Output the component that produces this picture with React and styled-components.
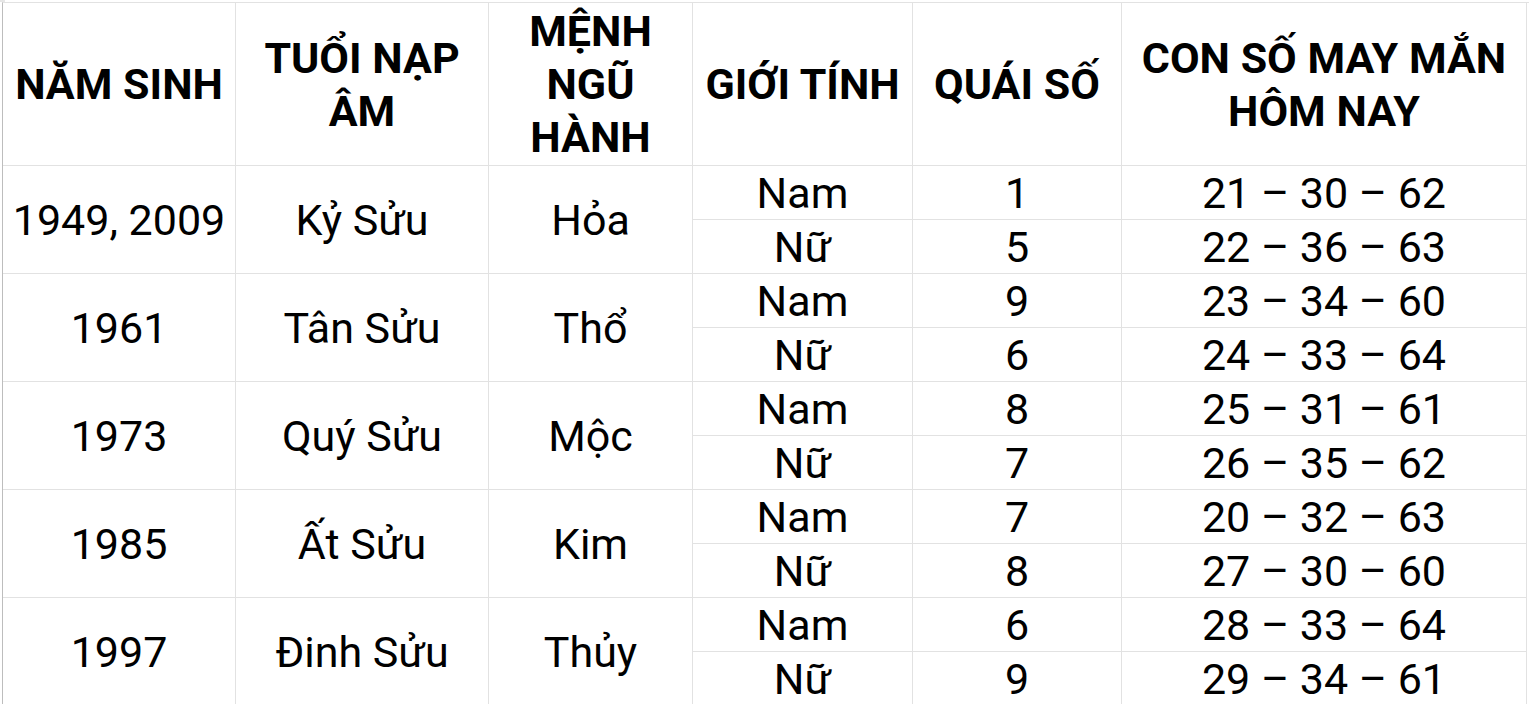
import React from "react";
import styled, { createGlobalStyle } from "styled-components";

const GlobalStyle = createGlobalStyle`
    html, body {
        margin: 0;
        padding: 0;
        background: #ffffff;
    }
    body {
        font-family: Roboto, "Noto Sans", "Liberation Sans", sans-serif;
        color: #000000;
        overflow: hidden;
    }
`;

const Sheet = styled.div`
    padding: 2px 0 0 2px;
    width: 1529px;
    height: 704px;
    box-sizing: border-box;
    position: relative;
    overflow: hidden;
`;

const Corner = styled.div`
    position: absolute;
    top: 0;
    left: 0;
    width: 5px;
    height: 2px;
    background: #e6e6e6;
`;

const Table = styled.div`
    display: grid;
    grid-template-columns: 233px 253px 204px 220px 209px 405px;
    grid-template-rows: 163px repeat(10, 54px);
    border-top: 1px solid #e2e2e2;
    border-left: 1px solid #bdbdbd;
    box-sizing: border-box;
`;

const Cell = styled.div`
    display: flex;
    align-items: center;
    justify-content: center;
    text-align: center;
    box-sizing: border-box;
    padding-top: 1px;
    border-right: 1px solid #e2e2e2;
    border-bottom: 1px solid #e2e2e2;
    font-size: 43px;
    line-height: 53px;
    font-weight: ${(p) => (p.$head ? 700 : 400)};
    grid-row: ${(p) => (p.$span ? `span ${p.$span}` : "auto")};
    white-space: pre-line;
`;

const headers = [
    "NĂM SINH",
    "TUỔI NẠP\nÂM",
    "MỆNH\nNGŨ\nHÀNH",
    "GIỚI TÍNH",
    "QUÁI SỐ",
    "CON SỐ MAY MẮN\nHÔM NAY",
];

const rows = [
    { year: "1949, 2009", tuoi: "Kỷ Sửu", menh: "Hỏa", nam: ["1", "21 – 30 – 62"], nu: ["5", "22 – 36 – 63"] },
    { year: "1961", tuoi: "Tân Sửu", menh: "Thổ", nam: ["9", "23 – 34 – 60"], nu: ["6", "24 – 33 – 64"] },
    { year: "1973", tuoi: "Quý Sửu", menh: "Mộc", nam: ["8", "25 – 31 – 61"], nu: ["7", "26 – 35 – 62"] },
    { year: "1985", tuoi: "Ất Sửu", menh: "Kim", nam: ["7", "20 – 32 – 63"], nu: ["8", "27 – 30 – 60"] },
    { year: "1997", tuoi: "Đinh Sửu", menh: "Thủy", nam: ["6", "28 – 33 – 64"], nu: ["9", "29 – 34 – 61"] },
];

const App = () => {
    return (
        <>
            <GlobalStyle />
            <Sheet>
                <Corner />
                <Table>
                    {headers.map((h) => (
                        <Cell key={h} $head>
                            {h}
                        </Cell>
                    ))}
                    {rows.map((r) => (
                        <React.Fragment key={r.year}>
                            <Cell $span={2}>{r.year}</Cell>
                            <Cell $span={2}>{r.tuoi}</Cell>
                            <Cell $span={2}>{r.menh}</Cell>
                            <Cell>Nam</Cell>
                            <Cell>{r.nam[0]}</Cell>
                            <Cell>{r.nam[1]}</Cell>
                            <Cell>Nữ</Cell>
                            <Cell>{r.nu[0]}</Cell>
                            <Cell>{r.nu[1]}</Cell>
                        </React.Fragment>
                    ))}
                </Table>
            </Sheet>
        </>
    );
};

export default App;
